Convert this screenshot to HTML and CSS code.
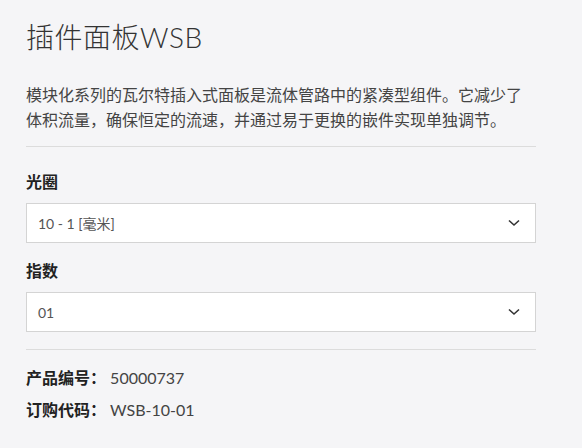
FILE: index.html
```html
<!DOCTYPE html>
<html lang="zh-CN">
<head>
  <meta charset="UTF-8">
  <title>插件面板WSB</title>
  <link rel="stylesheet" href="styles.css">
</head>
<body>
  <div class="panel">
    <h1 class="title">插件面板WSB</h1>
    <p class="intro">模块化系列的瓦尔特插入式面板是流体管路中的紧凑型组件。它减少了体积流量，确保恒定的流速，并通过易于更换的嵌件实现单独调节。</p>

    <div class="options">
      <div class="field">
        <label class="field-label">光圈</label>
        <div class="select">
          <span>10 - 1 [毫米]</span>
          <svg class="chevron" width="12" height="8" viewBox="0 0 12 8"><path d="M1 1.5 L6 6 L11 1.5" fill="none" stroke="#333" stroke-width="1.6"/></svg>
        </div>
      </div>
      <div class="field">
        <label class="field-label">指数</label>
        <div class="select">
          <span>01</span>
          <svg class="chevron" width="12" height="8" viewBox="0 0 12 8"><path d="M1 1.5 L6 6 L11 1.5" fill="none" stroke="#333" stroke-width="1.6"/></svg>
        </div>
      </div>
    </div>

    <div class="specs">
      <p><strong>产品编号：</strong> 50000737</p>
      <p><strong>订购代码：</strong> WSB-10-01</p>
    </div>
  </div>
</body>
</html>
```

FILE: styles.css
```css
body {
  margin: 0;
  background: #f5f5f7;
  color: #444;
  font-family: 'Lato', 'Noto Sans CJK SC', sans-serif;
}

.panel {
  width: 510px;
  padding: 18px 0 0 26px;
}

.title {
  margin: 0;
  font-size: 28px;
  line-height: 38px;
  font-weight: 300;
  letter-spacing: 0.5px;
  color: #333;
}

.intro {
  margin: 26px 0 0;
  font-size: 16px;
  line-height: 25px;
  padding-bottom: 14px;
  border-bottom: 1px solid #dcdcdc;
}

.options {
  padding: 24px 0 17px;
  border-bottom: 1px solid #dcdcdc;
  display: flex;
  flex-direction: column;
  gap: 17px;
}

.field-label {
  display: block;
  font-size: 16px;
  line-height: 22px;
  font-weight: 700;
  color: #222;
  margin-bottom: 10px;
}

.select {
  height: 38px;
  display: flex;
  align-items: center;
  justify-content: space-between;
  padding: 0 15px 0 11px;
  background: #fff;
  border: 1px solid #d4d4d4;
  font-size: 14px;
  color: #555;
}

.chevron {
  display: block;
}

.specs {
  padding-top: 16px;
}

.specs p {
  margin: 0 0 8px;
  font-size: 16px;
  line-height: 24px;
  color: #444;
}

.specs strong {
  color: #222;
  font-weight: 700;
}
```
